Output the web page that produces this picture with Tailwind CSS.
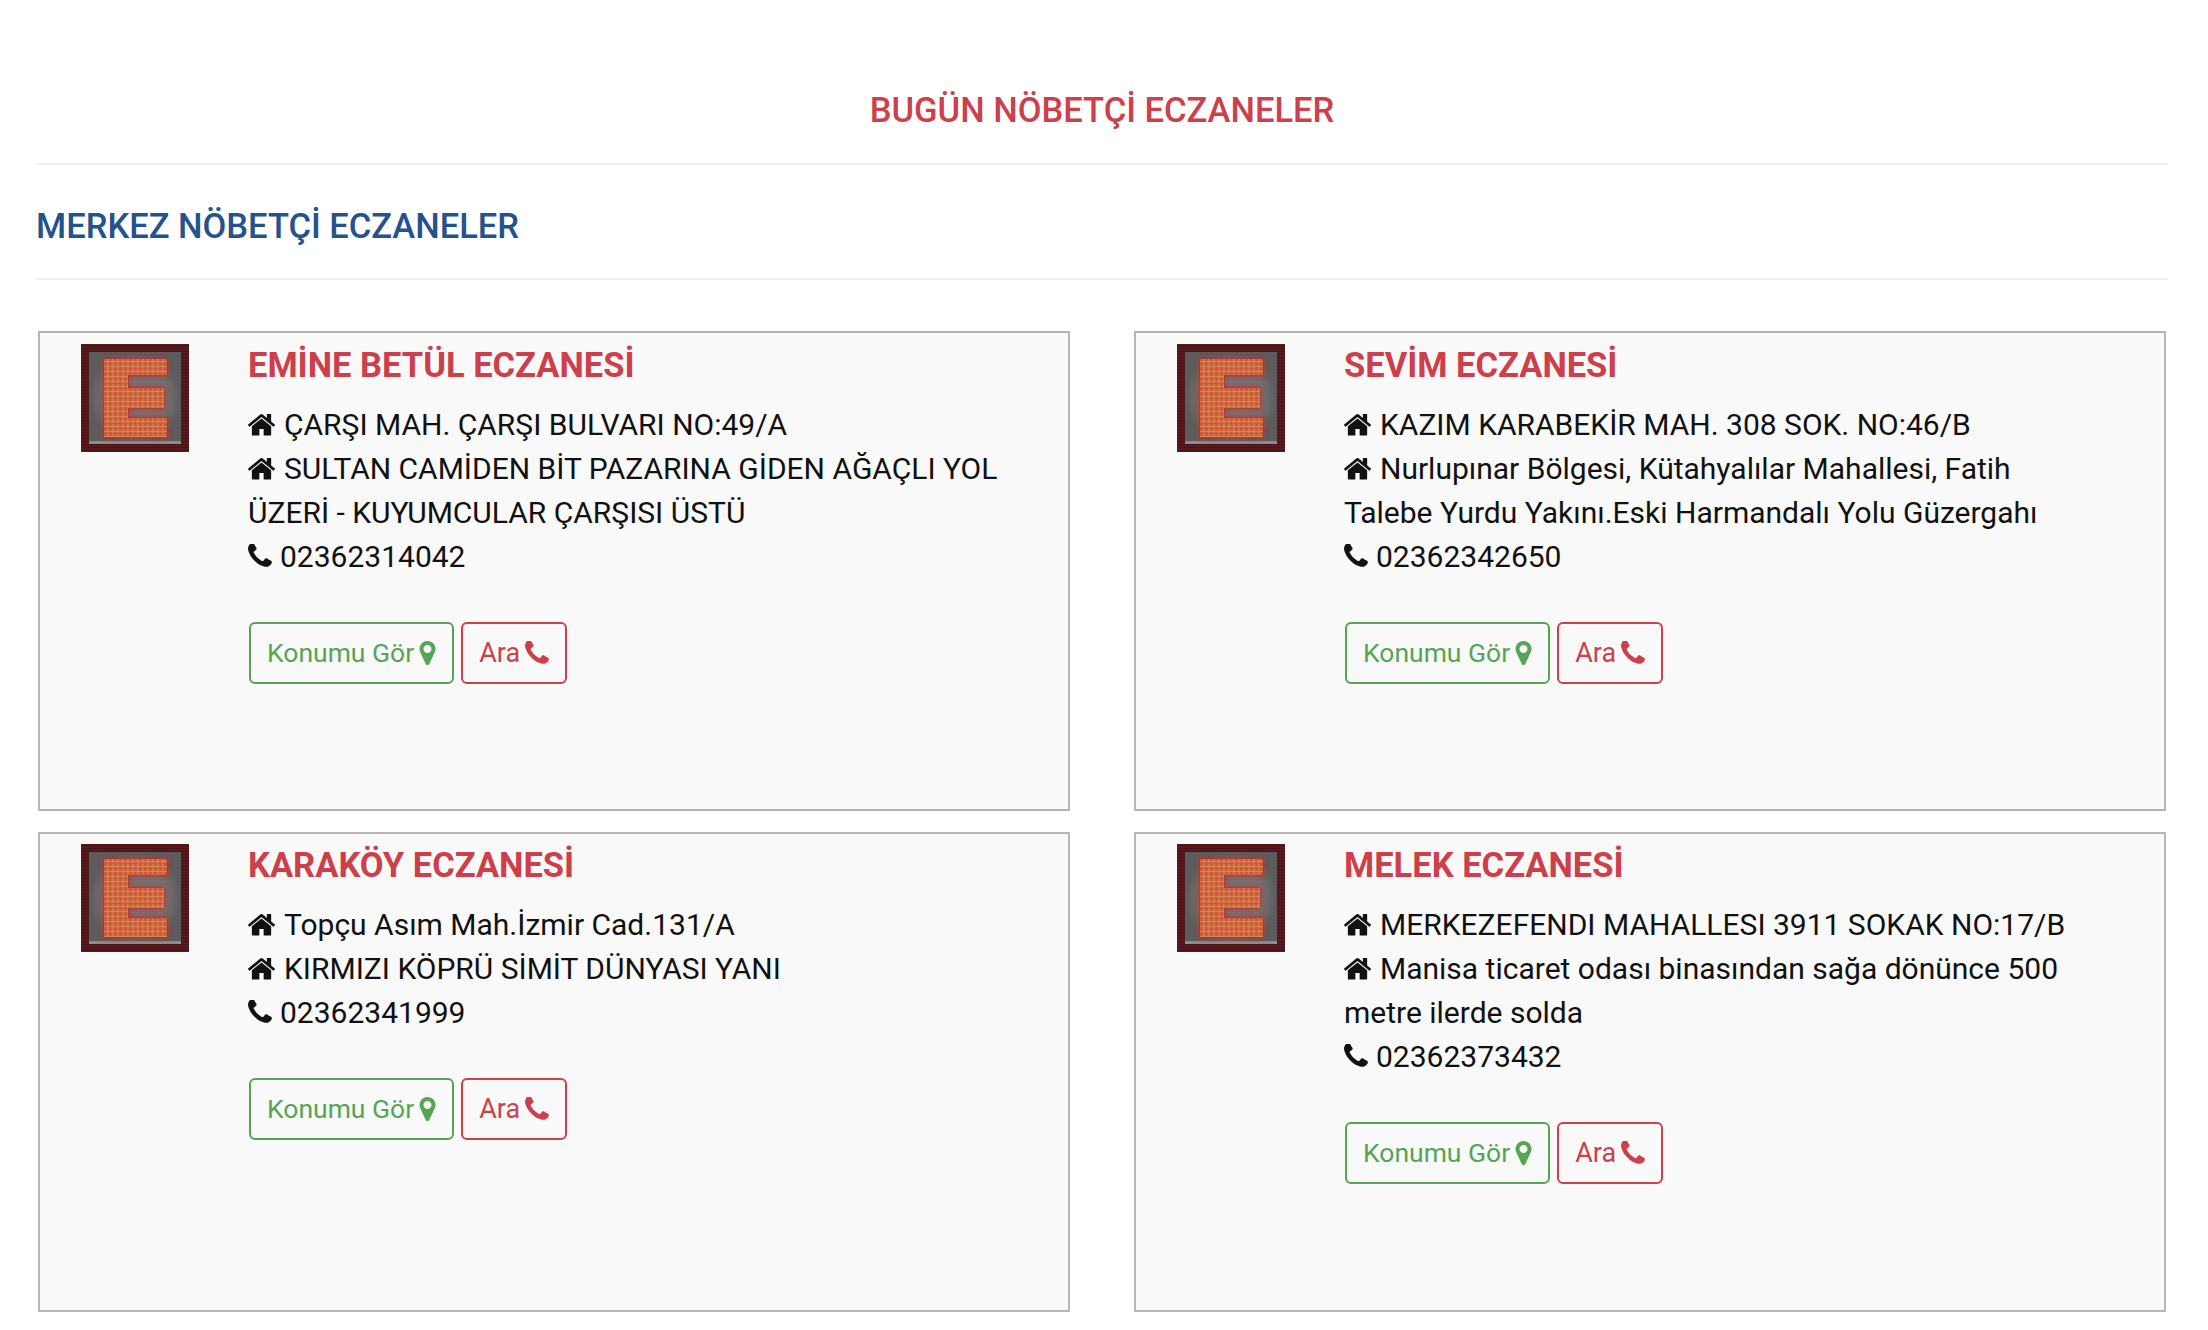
<!DOCTYPE html>
<html lang="tr">
<head>
  <meta charset="UTF-8" />
  <title>Bugün Nöbetçi Eczaneler</title>
  <script src="https://cdn.jsdelivr.net/npm/@tailwindcss/browser@4"></script>
</head>
<body class="bg-white font-['Roboto',sans-serif] text-[#111] overflow-hidden">
  <!-- shared icons and pharmacy logo -->
  <svg width="0" height="0" class="absolute">
    <defs>
      <symbol id="i-home" viewBox="90 200 1612 1352"><path fill="currentColor" d="M1472 992v480q0 26-19 45t-45 19h-384v-384h-256v384h-384q-26 0-45-19t-19-45v-480q0-1 .5-3t.5-3l575-474 575 474q1 2 1 6zm223-69l-62 74q-8 9-21 11h-3q-13 0-21-7l-692-577-692 577q-12 8-24 7-13-2-21-11l-62-74q-8-10-7-23.5t11-21.5l719-599q32-26 76-26t76 26l244 204v-195q0-14 9-23t23-9h192q14 0 23 9t9 23v408l219 182q10 8 11 21.5t-7 23.5z"/></symbol>
      <symbol id="i-phone" viewBox="190 190 1420 1420"><path fill="currentColor" d="M1600 1240q0 27-10 70.5t-21 68.5q-21 50-122 106-94 51-186 51-27 0-53-3.5t-57.5-12.5-47-14.5-55.5-20.5-49-18q-98-35-175-83-127-79-264-216t-216-264q-48-77-83-175-3-9-18-49t-20.5-55.5-14.5-47-12.5-57.5-3.5-53q0-92 51-186 56-101 106-122 25-11 68.5-21t70.5-10q14 0 21 3 18 6 53 76 11 19 30 54t35 63.5 31 53.5q3 4 17.5 25t21.5 35.5 7 28.5q0 20-28.5 50t-62 55-62 53-28.5 46q0 9 5 22.5t8.5 20.5 14 24 11.5 19q76 137 174 235t235 174q2 1 19 11.5t24 14 20.5 8.5 22.5 5q18 0 46-28.5t53-62 55-62 50-28.5q14 0 28.5 7t35.5 21.5 25 17.5q25 15 53.5 31t63.5 35 54 30q70 35 76 53 3 7 3 21z"/></symbol>
      <symbol id="i-marker" viewBox="384 128 1024 1536"><path fill="currentColor" d="M1152 640q0-106-75-181t-181-75-181 75-75 181 75 181 181 75 181-75 75-181zm256 0q0 109-33 179l-364 774q-16 33-47.5 52t-67.5 19-67.5-19-47.5-52l-363-774q-33-70-33-179 0-212 150-362t362-150 362 150 150 362z"/></symbol>
      <pattern id="frame-lines" width="3" height="3" patternUnits="userSpaceOnUse">
        <rect width="3" height="3" fill="#591a1e"/><rect width="3" height="1" y="1" fill="#431317"/>
      </pattern>
      <pattern id="plaid" width="5" height="5" patternUnits="userSpaceOnUse">
        <rect width="5" height="5" fill="#cc5f3e"/>
        <rect x="1.5" width="0.8" height="5" fill="#dc9a58"/><rect x="4" width="0.5" height="5" fill="#d2503a"/>
        <rect y="2" width="5" height="0.8" fill="#d88e50"/><rect y="4" width="5" height="0.5" fill="#d2503a"/>
      </pattern>
      <radialGradient id="plate">
        <stop offset="0" stop-color="#7c7272"/><stop offset="0.7" stop-color="#747070"/><stop offset="1" stop-color="#5c5c5c"/>
      </radialGradient>
      <filter id="glow" x="-20%" y="-20%" width="140%" height="140%"><feGaussianBlur stdDeviation="2.5"/></filter>
      <symbol id="logo" viewBox="0 0 108 108">
        <rect width="108" height="108" fill="url(#frame-lines)"/>
        <rect x="8" y="8" width="92" height="92" fill="url(#plate)"/>
        <rect x="8" y="97" width="92" height="3" fill="#8c8c8c"/>
        <path d="M23 15h63v16H47v13h36v20H47v10h39v19H23z" fill="#c02a2a" stroke="#c02a2a" stroke-width="2" filter="url(#glow)"/>
        <path d="M23 15h63v16H47v13h36v20H47v10h39v19H23z" fill="url(#plaid)"/>
      </symbol>
    </defs>
  </svg>

  <main class="pl-[36px] pr-[40px]">
    <h2 class="pt-[90px] pb-[33px] text-center text-[34.5px] leading-[40px] font-medium text-[#cd3f4a] border-b-2 border-[#f0f0f0]">BUGÜN NÖBETÇİ ECZANELER</h2>
    <h3 class="pt-[33px] text-[34.5px] leading-[56px] font-medium text-[#25528f] border-b-2 border-[#f0f0f0] h-[115px]">MERKEZ NÖBETÇİ ECZANELER</h3>

    <div class="grid grid-cols-2 gap-x-[64px] gap-y-[21px] px-[2px] mt-[51px]">

      <!-- EMİNE BETÜL -->
      <article class="h-[480px] pt-[1px] bg-[#f9f9f9] border-2 border-[#b5b5b5] flex">
        <svg class="w-[108px] h-[108px] ml-[41px] mt-[10px] shrink-0"><use href="#logo"/></svg>
        <div class="ml-[59px] w-[756px]">
          <h4 class="mt-[9px] text-[34.5px] leading-[44px] font-bold text-[#cd3f4a]">EMİNE BETÜL ECZANESİ</h4>
          <p class="mt-[16px] text-[30px] leading-[44px]">
            <svg class="inline-block w-[27px] h-[23px] mr-[9px] align-[-1px]"><use href="#i-home"/></svg>ÇARŞI MAH. ÇARŞI BULVARI NO:49/A<br>
            <svg class="inline-block w-[27px] h-[23px] mr-[9px] align-[-1px]"><use href="#i-home"/></svg>SULTAN CAMİDEN BİT PAZARINA GİDEN AĞAÇLI YOL ÜZERİ - KUYUMCULAR ÇARŞISI ÜSTÜ<br>
            <svg class="inline-block w-[24px] h-[24px] mr-[8px] align-[-1px]"><use href="#i-phone"/></svg>02362314042
          </p>
          <div class="mt-[43px] ml-[1px] flex gap-[7px]">
            <a class="h-[62px] px-[16px] flex items-center gap-[5px] border-2 border-[#55a555] rounded-[6px] text-[#55a555] text-[26.5px]">Konumu Gör <svg class="w-[17px] h-[24px]"><use href="#i-marker"/></svg></a>
            <a class="h-[62px] px-[16px] flex items-center gap-[5px] border-2 border-[#cd3f4a] rounded-[6px] text-[#cd3f4a] text-[27px]">Ara <svg class="w-[24px] h-[24px]"><use href="#i-phone"/></svg></a>
          </div>
        </div>
      </article>

      <!-- SEVİM -->
      <article class="h-[480px] pt-[1px] bg-[#f9f9f9] border-2 border-[#b5b5b5] flex">
        <svg class="w-[108px] h-[108px] ml-[41px] mt-[10px] shrink-0"><use href="#logo"/></svg>
        <div class="ml-[59px] w-[756px]">
          <h4 class="mt-[9px] text-[34.5px] leading-[44px] font-bold text-[#cd3f4a]">SEVİM ECZANESİ</h4>
          <p class="mt-[16px] text-[30px] leading-[44px]">
            <svg class="inline-block w-[27px] h-[23px] mr-[9px] align-[-1px]"><use href="#i-home"/></svg>KAZIM KARABEKİR MAH. 308 SOK. NO:46/B<br>
            <svg class="inline-block w-[27px] h-[23px] mr-[9px] align-[-1px]"><use href="#i-home"/></svg>Nurlupınar Bölgesi, Kütahyalılar Mahallesi, Fatih Talebe Yurdu Yakını.Eski Harmandalı Yolu Güzergahı<br>
            <svg class="inline-block w-[24px] h-[24px] mr-[8px] align-[-1px]"><use href="#i-phone"/></svg>02362342650
          </p>
          <div class="mt-[43px] ml-[1px] flex gap-[7px]">
            <a class="h-[62px] px-[16px] flex items-center gap-[5px] border-2 border-[#55a555] rounded-[6px] text-[#55a555] text-[26.5px]">Konumu Gör <svg class="w-[17px] h-[24px]"><use href="#i-marker"/></svg></a>
            <a class="h-[62px] px-[16px] flex items-center gap-[5px] border-2 border-[#cd3f4a] rounded-[6px] text-[#cd3f4a] text-[27px]">Ara <svg class="w-[24px] h-[24px]"><use href="#i-phone"/></svg></a>
          </div>
        </div>
      </article>

      <!-- KARAKÖY -->
      <article class="h-[480px] bg-[#f9f9f9] border-2 border-[#b5b5b5] flex">
        <svg class="w-[108px] h-[108px] ml-[41px] mt-[10px] shrink-0"><use href="#logo"/></svg>
        <div class="ml-[59px] w-[756px]">
          <h4 class="mt-[9px] text-[34.5px] leading-[44px] font-bold text-[#cd3f4a]">KARAKÖY ECZANESİ</h4>
          <p class="mt-[16px] text-[30px] leading-[44px]">
            <svg class="inline-block w-[27px] h-[23px] mr-[9px] align-[-1px]"><use href="#i-home"/></svg>Topçu Asım Mah.İzmir Cad.131/A<br>
            <svg class="inline-block w-[27px] h-[23px] mr-[9px] align-[-1px]"><use href="#i-home"/></svg>KIRMIZI KÖPRÜ SİMİT DÜNYASI YANI<br>
            <svg class="inline-block w-[24px] h-[24px] mr-[8px] align-[-1px]"><use href="#i-phone"/></svg>02362341999
          </p>
          <div class="mt-[43px] ml-[1px] flex gap-[7px]">
            <a class="h-[62px] px-[16px] flex items-center gap-[5px] border-2 border-[#55a555] rounded-[6px] text-[#55a555] text-[26.5px]">Konumu Gör <svg class="w-[17px] h-[24px]"><use href="#i-marker"/></svg></a>
            <a class="h-[62px] px-[16px] flex items-center gap-[5px] border-2 border-[#cd3f4a] rounded-[6px] text-[#cd3f4a] text-[27px]">Ara <svg class="w-[24px] h-[24px]"><use href="#i-phone"/></svg></a>
          </div>
        </div>
      </article>

      <!-- MELEK -->
      <article class="h-[480px] bg-[#f9f9f9] border-2 border-[#b5b5b5] flex">
        <svg class="w-[108px] h-[108px] ml-[41px] mt-[10px] shrink-0"><use href="#logo"/></svg>
        <div class="ml-[59px] w-[756px]">
          <h4 class="mt-[9px] text-[34.5px] leading-[44px] font-bold text-[#cd3f4a]">MELEK ECZANESİ</h4>
          <p class="mt-[16px] text-[30px] leading-[44px]">
            <svg class="inline-block w-[27px] h-[23px] mr-[9px] align-[-1px]"><use href="#i-home"/></svg>MERKEZEFENDI MAHALLESI 3911 SOKAK NO:17/B<br>
            <svg class="inline-block w-[27px] h-[23px] mr-[9px] align-[-1px]"><use href="#i-home"/></svg>Manisa ticaret odası binasından sağa dönünce 500 metre ilerde solda<br>
            <svg class="inline-block w-[24px] h-[24px] mr-[8px] align-[-1px]"><use href="#i-phone"/></svg>02362373432
          </p>
          <div class="mt-[43px] ml-[1px] flex gap-[7px]">
            <a class="h-[62px] px-[16px] flex items-center gap-[5px] border-2 border-[#55a555] rounded-[6px] text-[#55a555] text-[26.5px]">Konumu Gör <svg class="w-[17px] h-[24px]"><use href="#i-marker"/></svg></a>
            <a class="h-[62px] px-[16px] flex items-center gap-[5px] border-2 border-[#cd3f4a] rounded-[6px] text-[#cd3f4a] text-[27px]">Ara <svg class="w-[24px] h-[24px]"><use href="#i-phone"/></svg></a>
          </div>
        </div>
      </article>

    </div>
  </main>
</body>
</html>
